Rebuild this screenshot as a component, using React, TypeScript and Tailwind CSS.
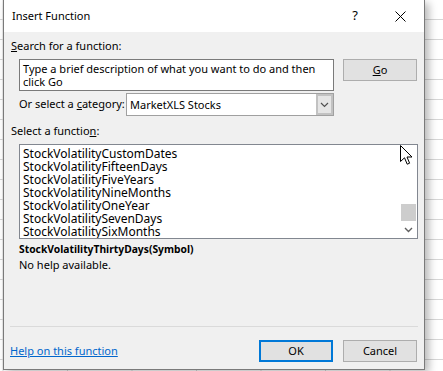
import React from 'react';

const functions = [
    'StockVolatilityCustomDates',
    'StockVolatilityFifteenDays',
    'StockVolatilityFiveYears',
    'StockVolatilityNineMonths',
    'StockVolatilityOneYear',
    'StockVolatilitySevenDays',
    'StockVolatilitySixMonths',
];

const font = { fontFamily: '"Noto Sans", "Segoe UI", sans-serif' };

function Cursor() {
    return (
        <svg className="absolute left-[400px] top-[145px]" width="13" height="21" viewBox="0 0 13 21">
            <path d="M0.5 0.5 L0.5 16.5 L4.5 12.8 L7.2 19.2 L9.6 18.2 L7 12 L12 12 Z" fill="#fff" stroke="#000" strokeWidth="1" strokeLinejoin="round" />
        </svg>
    );
}

function TitleBar() {
    return (
        <div className="h-[32px] bg-white flex items-center">
            <span className="ml-[8px] text-[11px] text-black">Insert Function</span>
            <span className="ml-auto mr-[37px] text-[13px] text-black">?</span>
            <svg className="mr-[18px]" width="11" height="11" viewBox="0 0 11 11">
                <path d="M0.5 0.5 L10.5 10.5 M10.5 0.5 L0.5 10.5" stroke="#000" strokeWidth="1" />
            </svg>
        </div>
    );
}

function Button({ children, primary }: { children: React.ReactNode; primary?: boolean }) {
    return (
        <div
            className={
                primary
                    ? 'w-[74px] h-[22px] border-2 border-[#0078d7] bg-[#e1e1e1] flex items-center justify-center text-[11px]'
                    : 'w-[74px] h-[22px] border border-[#adadad] bg-[#e1e1e1] flex items-center justify-center text-[11px]'
            }
        >
            {children}
        </div>
    );
}

function FunctionList() {
    return (
        <div className="ml-[15px] mt-[5px] w-[399px] h-[95px] border border-[#828790] bg-white flex">
            <div className="flex-1 pt-[2px] pl-[3px] overflow-hidden">
                {functions.map(f => (
                    <div key={f} className="h-[13px] leading-[13px] text-[12px]">
                        {f}
                    </div>
                ))}
            </div>
            <div className="w-[15px] mr-[1px] flex flex-col items-center">
                <div className="flex-1" />
                <div className="w-[15px] h-[17px] bg-[#cdcdcd] mb-[6px]" />
                <svg className="mb-[5px]" width="9" height="6" viewBox="0 0 9 6">
                    <path d="M1 1 L4.5 4.5 L8 1" fill="none" stroke="#606060" strokeWidth="1.4" />
                </svg>
            </div>
        </div>
    );
}

export default function App() {
    return (
        <div
            className="relative w-[443px] h-[371px] bg-white bg-[linear-gradient(to_right,#d6d6d6_1px,transparent_1px),linear-gradient(to_bottom,#d6d6d6_1px,transparent_1px)] bg-[size:64.5px_20px] bg-[position:2.5px_19px] overflow-hidden text-black"
            style={font}
        >
            <div className="ml-[3px] w-[422px] h-[370px] border border-t-0 border-[#7a7a7a] bg-[#f0f0f0] flex flex-col shadow-[4px_3px_8px_rgba(0,0,0,0.28)]">
                <TitleBar />

                <div className="ml-[7px] mt-[6px] h-[16px] leading-[16px] text-[11px]">
                    <span className="underline">S</span>earch for a function:
                </div>

                <div className="mt-[5px] h-[32px] flex">
                    <div className="ml-[15px] w-[315px] h-[32px] border border-[#7a7a7a] bg-white px-[3px] pt-[2px] text-[11px] leading-[13px]">
                        Type a brief description of what you want to do and then click Go
                    </div>
                    <div className="ml-[9px]">
                        <Button>
                            <span className="underline">G</span>o
                        </Button>
                    </div>
                </div>

                <div className="mt-[2px] h-[23px] flex items-center">
                    <span className="ml-[15px] w-[107px] text-[11px] whitespace-nowrap">
                        Or select a <span className="underline">c</span>ategory:
                    </span>
                    <div className="w-[208px] h-[23px] border border-[#a0a0a0] bg-white flex">
                        <span className="flex-1 pl-[3px] text-[11px] leading-[21px]">MarketXLS Stocks</span>
                        <div className="w-[17px] h-[21px] border-2 border-[#c2c2c2] bg-[#e5e5e5] flex items-center justify-center">
                            <svg width="9" height="6" viewBox="0 0 9 6">
                                <path d="M1 1 L4.5 4.5 L8 1" fill="none" stroke="#505050" strokeWidth="1.2" />
                            </svg>
                        </div>
                    </div>
                </div>

                <div className="ml-[7px] mt-[7px] h-[16px] leading-[16px] text-[11px]">
                    Select a functio<span className="underline">n</span>:
                </div>

                <FunctionList />

                <div className="ml-[15px] mt-[2px] h-[16px] leading-[16px] text-[10.3px] font-bold">
                    StockVolatilityThirtyDays(Symbol)
                </div>
                <div className="ml-[15px] h-[16px] leading-[16px] text-[11px]">No help available.</div>

                <div className="mx-[6px] mt-[53px] h-px bg-[#dadada]" />

                <div className="mt-[13px] h-[22px] flex items-center">
                    <span className="ml-[6px] text-[11px] text-[#0066cc] underline">Help on this function</span>
                    <div className="ml-auto flex gap-[10px] mr-[7px]">
                        <Button primary>OK</Button>
                        <Button>Cancel</Button>
                    </div>
                </div>
            </div>
            <Cursor />
        </div>
    );
}
